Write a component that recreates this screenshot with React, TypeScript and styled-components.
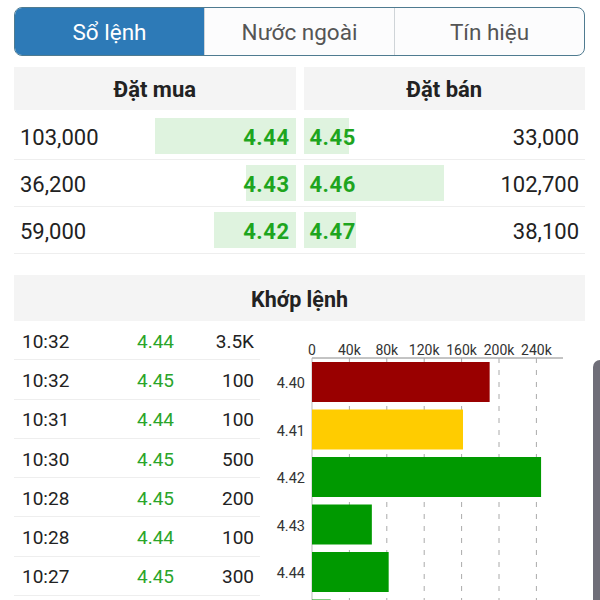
import React from "react";
import styled, { createGlobalStyle } from "styled-components";

const GlobalStyle = createGlobalStyle`
  html, body {
    margin: 0;
    padding: 0;
    background: #ffffff;
    font-family: Roboto, "Noto Sans", Arial, sans-serif;
    color: #222;
    overflow: hidden;
  }
`;

const Page = styled.div`
  width: 600px;
  height: 600px;
  box-sizing: border-box;
  padding: 7px 15px 0 14px;
  overflow: hidden;
  position: relative;
`;

const Tabs = styled.div`
  display: flex;
  height: 49px;
  box-sizing: border-box;
  border: 1.5px solid #4f7b90;
  border-radius: 8px;
  overflow: hidden;
  background: #fcfcfd;
`;

const Tab = styled.div<{ $active?: boolean }>`
  flex: 1;
  display: flex;
  align-items: center;
  justify-content: center;
  font-size: 22.5px;
  color: ${(p) => (p.$active ? "#ffffff" : "#555")};
  background: ${(p) => (p.$active ? "#2d7ab7" : "transparent")};
  & + & {
    border-left: 1px solid #cfd4d8;
  }
`;

const BookGrid = styled.div`
  display: grid;
  grid-template-columns: 1fr 1fr;
  column-gap: 8px;
  margin-top: 11px;
`;

const HeaderCell = styled.div`
  height: 43px;
  display: flex;
  align-items: center;
  justify-content: center;
  background: #f4f4f4;
  font-size: 22px;
  font-weight: 700;
  color: #222;
  margin-bottom: 3px;
  padding-top: 2px;
  box-sizing: border-box;
`;

const BookRow = styled.div`
  grid-column: 1 / span 2;
  display: grid;
  grid-template-columns: 1fr 1fr;
  column-gap: 8px;
  height: 47px;
  box-sizing: border-box;
  border-bottom: 1px solid #eeeeee;
`;

const BookCell = styled.div<{ $side: "buy" | "sell" }>`
  display: flex;
  align-items: center;
  justify-content: space-between;
  flex-direction: ${(p) => (p.$side === "buy" ? "row" : "row-reverse")};
  padding: 2px 6px 0;
  background-repeat: no-repeat;
  background-position: ${(p) => (p.$side === "buy" ? "right 5px" : "left 5px")};
`;

const Volume = styled.span`
  font-size: 22px;
  color: #222;
`;

const Price = styled.span`
  font-size: 22px;
  font-weight: 700;
  letter-spacing: 0.5px;
  color: #1ea51e;
`;

const SectionHeader = styled.div`
  margin-top: 21px;
  height: 46px;
  display: flex;
  align-items: center;
  justify-content: center;
  background: #f4f4f4;
  font-size: 21.5px;
  font-weight: 700;
  color: #222;
  padding-top: 2px;
  box-sizing: border-box;
`;

const MatchArea = styled.div`
  display: flex;
  align-items: flex-start;
`;

const TradeList = styled.div`
  width: 246px;
  flex: none;
`;

const TradeRow = styled.div`
  display: grid;
  grid-template-columns: 115px 60px 1fr;
  align-items: center;
  height: 39.3px;
  box-sizing: border-box;
  padding: 2px 6px 0 8px;
  border-bottom: 1px solid #eeeeee;
  font-size: 19px;
  color: #222;
`;

const TradePrice = styled.span`
  color: #2aa52a;
`;

const TradeVol = styled.span`
  text-align: right;
`;

const Chart = styled.svg`
  flex: none;
  display: block;
  overflow: hidden;
`;

const EdgeHandle = styled.div`
  position: absolute;
  right: -8px;
  top: 360px;
  width: 15px;
  height: 260px;
  border-radius: 7px;
  background: #6f6e78;
`;

const book = [
  { buyVol: "103,000", buyPrice: "4.44", buyBar: 141, sellPrice: "4.45", sellVol: "33,000", sellBar: 45 },
  { buyVol: "36,200", buyPrice: "4.43", buyBar: 50, sellPrice: "4.46", sellVol: "102,700", sellBar: 140 },
  { buyVol: "59,000", buyPrice: "4.42", buyBar: 82, sellPrice: "4.47", sellVol: "38,100", sellBar: 52 },
];

const trades = [
  ["10:32", "4.44", "3.5K"],
  ["10:32", "4.45", "100"],
  ["10:31", "4.44", "100"],
  ["10:30", "4.45", "500"],
  ["10:28", "4.45", "200"],
  ["10:28", "4.44", "100"],
  ["10:27", "4.45", "300"],
];

const volumes = [
  { price: "4.40", value: 190000, color: "#990000" },
  { price: "4.41", value: 161500, color: "#ffcc00" },
  { price: "4.42", value: 245000, color: "#009900" },
  { price: "4.43", value: 64000, color: "#009900" },
  { price: "4.44", value: 82000, color: "#009900" },
  { price: "4.45", value: 20000, color: "#009900" },
];

const X0 = 52;
const STEP = 37.4;
const AXIS_Y = 37;
const CHART_H = 280;

function VolumeChart() {
  const ticks = [0, 40, 80, 120, 160, 200, 240];
  const px = (v: number) => (v / 40000) * STEP;
  return (
    <Chart width={310} height={CHART_H} viewBox={`0 0 310 ${CHART_H}`}>
      {ticks.map((t, i) => (
        <text
          key={t}
          x={X0 + i * STEP}
          y={34}
          fontSize={14}
          fill="#333"
          textAnchor="middle"
          fontFamily="Roboto, sans-serif"
        >
          {t === 0 ? "0" : `${t}k`}
        </text>
      ))}
      <line x1={X0} x2={303} y1={AXIS_Y} y2={AXIS_Y} stroke="#888" strokeWidth={1} />
      {ticks.slice(1).map((t, i) => (
        <line
          key={t}
          x1={X0 + (i + 1) * STEP}
          x2={X0 + (i + 1) * STEP}
          y1={AXIS_Y}
          y2={CHART_H}
          stroke="#aaa"
          strokeWidth={1}
          strokeDasharray="5 7"
        />
      ))}
      <line x1={X0} x2={X0} y1={AXIS_Y} y2={CHART_H} stroke="#bbb" strokeWidth={1} />
      {volumes.map((b, i) => {
        const y = 41 + i * 47.5;
        return (
          <g key={b.price}>
            <rect x={X0} y={y} width={px(b.value)} height={40} fill={b.color} />
            {y + 26 < CHART_H && (
              <text
                x={45}
                y={y + 26}
                fontSize={14.5}
                fill="#333"
                textAnchor="end"
                fontFamily="Roboto, sans-serif"
              >
                {b.price}
              </text>
            )}
          </g>
        );
      })}
    </Chart>
  );
}

export default function App() {
  return (
    <>
      <GlobalStyle />
      <Page>
        <Tabs>
          <Tab $active>Sổ lệnh</Tab>
          <Tab>Nước ngoài</Tab>
          <Tab>Tín hiệu</Tab>
        </Tabs>

        <BookGrid>
          <HeaderCell>Đặt mua</HeaderCell>
          <HeaderCell>Đặt bán</HeaderCell>
          {book.map((r) => (
            <BookRow key={r.buyPrice}>
              <BookCell
                $side="buy"
                style={{
                  backgroundImage: "linear-gradient(#dff3df, #dff3df)",
                  backgroundSize: `${r.buyBar}px 36px`,
                }}
              >
                <Volume>{r.buyVol}</Volume>
                <Price>{r.buyPrice}</Price>
              </BookCell>
              <BookCell
                $side="sell"
                style={{
                  backgroundImage: "linear-gradient(#dff3df, #dff3df)",
                  backgroundSize: `${r.sellBar}px 36px`,
                }}
              >
                <Volume>{r.sellVol}</Volume>
                <Price>{r.sellPrice}</Price>
              </BookCell>
            </BookRow>
          ))}
        </BookGrid>

        <SectionHeader>Khớp lệnh</SectionHeader>
        <MatchArea>
          <TradeList>
            {trades.map(([t, p, v], i) => (
              <TradeRow key={i}>
                <span>{t}</span>
                <TradePrice>{p}</TradePrice>
                <TradeVol>{v}</TradeVol>
              </TradeRow>
            ))}
          </TradeList>
          <VolumeChart />
        </MatchArea>
        <EdgeHandle />
      </Page>
    </>
  );
}
